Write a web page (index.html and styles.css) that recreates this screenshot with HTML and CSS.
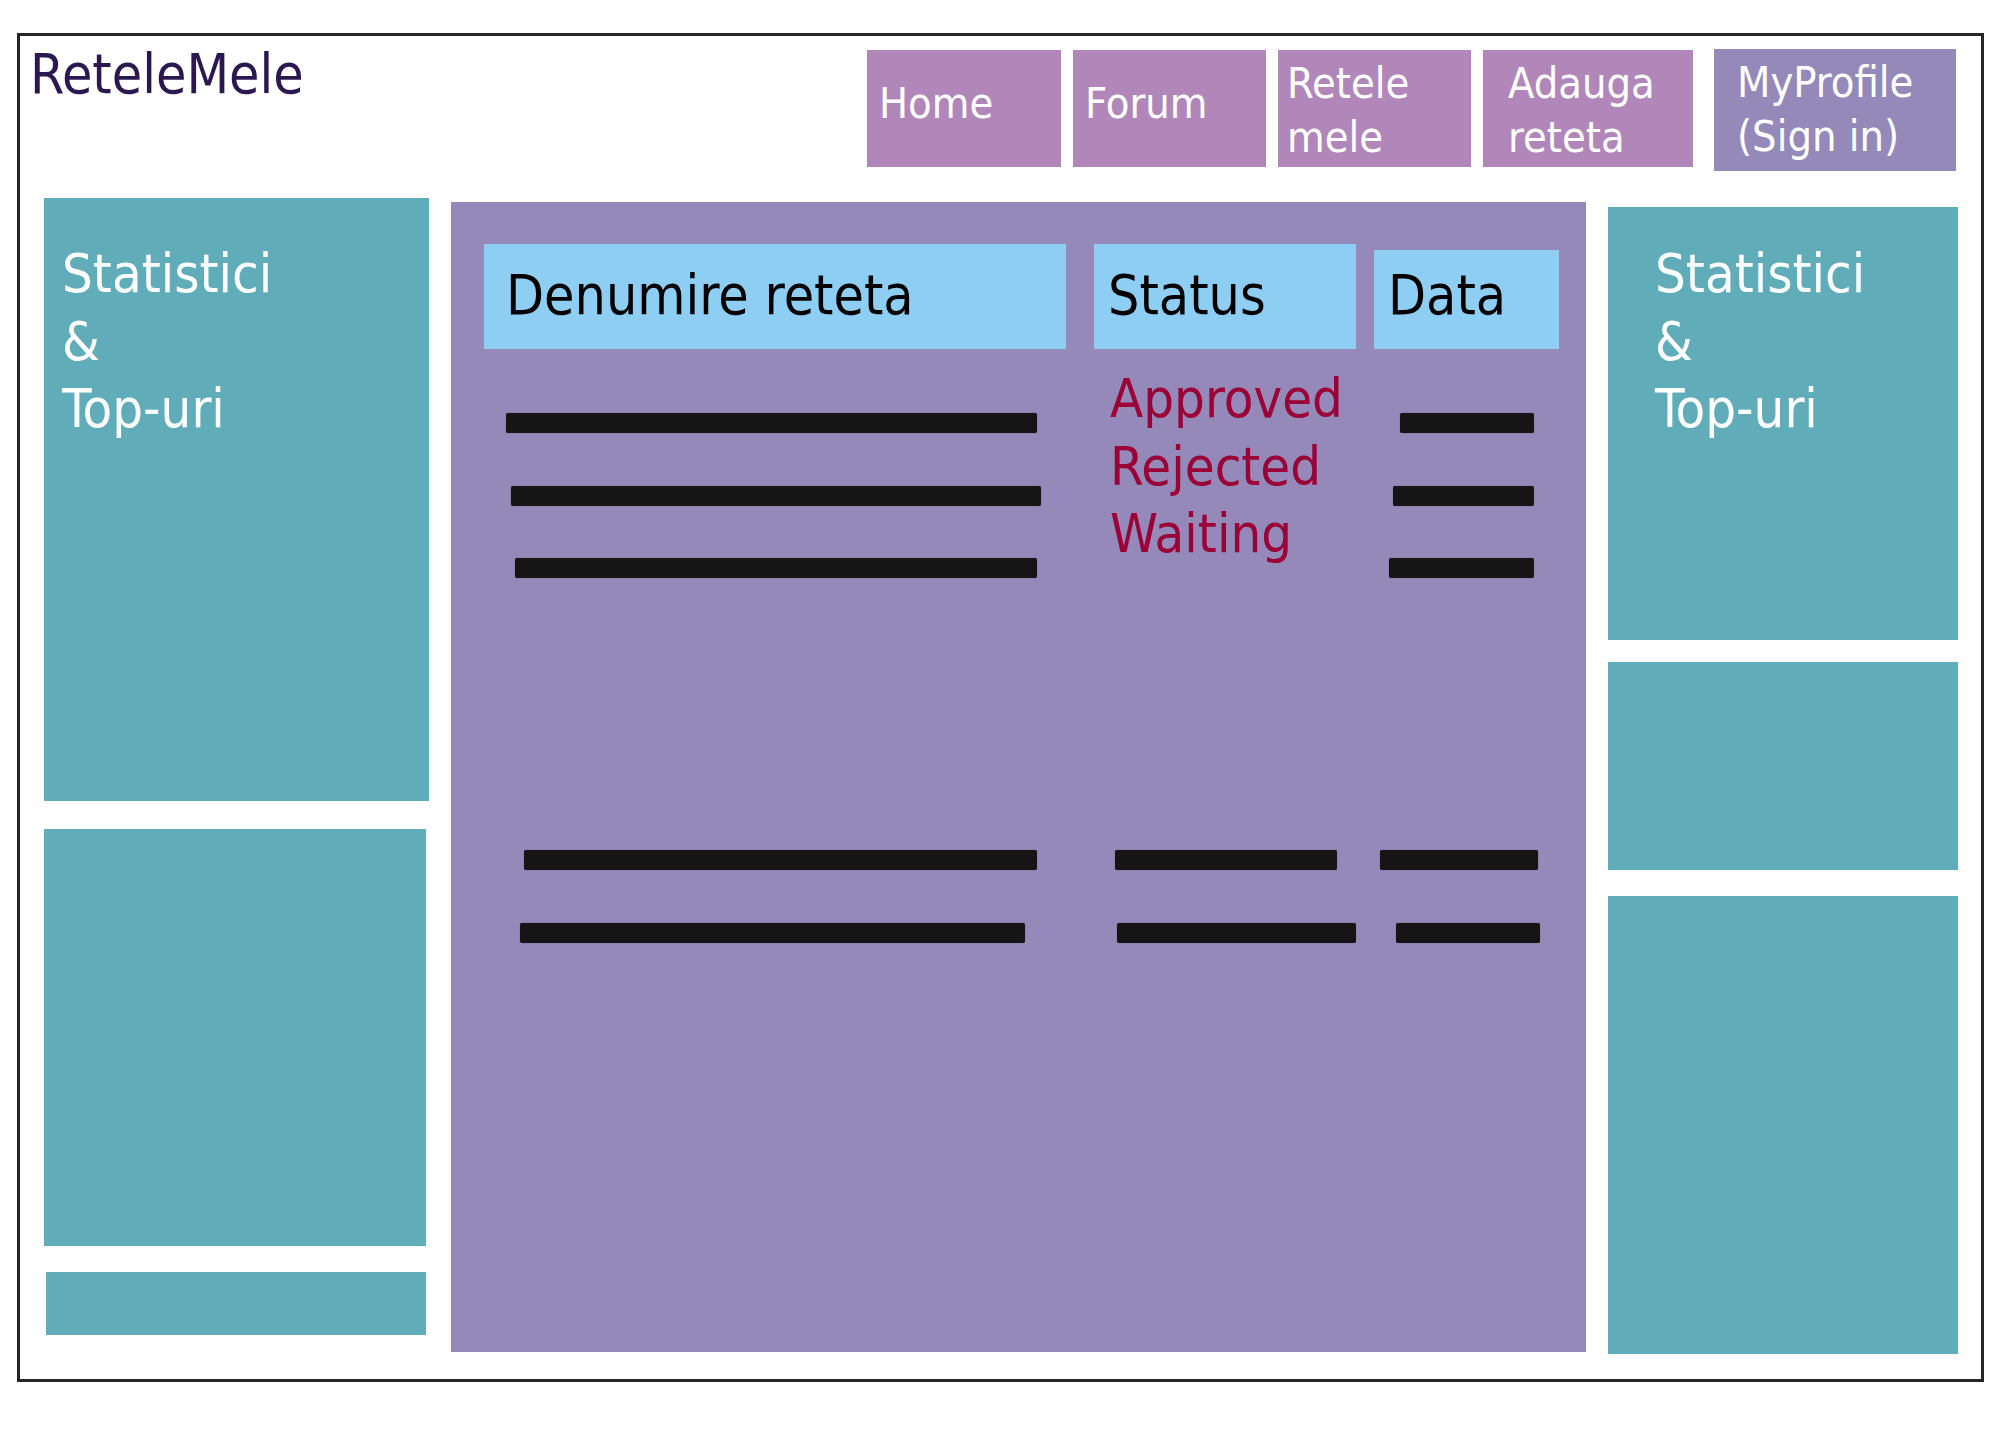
FILE: index.html
```html
<!DOCTYPE html>
<html lang="ro">
<head>
    <meta charset="UTF-8">
    <meta name="viewport" content="width=device-width, initial-scale=1.0">
    <title>ReteleMele - Retetele mele</title>
    <link rel="stylesheet" href="styles.css">
</head>
<body>
    <div class="frame">
        <header class="top-bar">
            <div class="logo">ReteleMele</div>
            <nav class="nav">
                <a class="nav-item single">Home</a>
                <a class="nav-item single">Forum</a>
                <a class="nav-item">Retele<br>mele</a>
                <a class="nav-item wide">Adauga<br>reteta</a>
                <a class="nav-item profile">MyProfile<br>(Sign in)</a>
            </nav>
        </header>

        <main class="layout">
            <!-- left sidebar -->
            <aside class="side side-left">
                <div class="tile tile-stats">Statistici<br>&amp;<br>Top-uri</div>
                <div class="tile tile-mid"></div>
                <div class="tile tile-small"></div>
            </aside>

            <!-- recipes table -->
            <section class="panel">
                <div class="table-head">
                    <div class="th col-name">Denumire reteta</div>
                    <div class="th col-status">Status</div>
                    <div class="th col-date">Data</div>
                </div>

                <div class="table-group">
                    <div class="col-name bars">
                        <div class="bar" style="width:531px;margin-left:22px"></div>
                        <div class="bar" style="width:530px;margin-left:27px"></div>
                        <div class="bar" style="width:522px;margin-left:31px"></div>
                    </div>
                    <div class="col-status status-list">
                        <div>Approved</div>
                        <div>Rejected</div>
                        <div>Waiting</div>
                    </div>
                    <div class="col-date bars">
                        <div class="bar" style="width:134px;margin-left:26px"></div>
                        <div class="bar" style="width:141px;margin-left:19px"></div>
                        <div class="bar" style="width:145px;margin-left:15px"></div>
                    </div>
                </div>

                <div class="table-group later">
                    <div class="col-name bars">
                        <div class="bar" style="width:513px;margin-left:40px"></div>
                        <div class="bar" style="width:505px;margin-left:36px"></div>
                    </div>
                    <div class="col-status bars">
                        <div class="bar" style="width:222px;margin-left:21px"></div>
                        <div class="bar" style="width:239px;margin-left:23px"></div>
                    </div>
                    <div class="col-date bars">
                        <div class="bar" style="width:158px;margin-left:6px"></div>
                        <div class="bar" style="width:144px;margin-left:22px"></div>
                    </div>
                </div>
            </section>

            <!-- right sidebar -->
            <aside class="side side-right">
                <div class="tile tile-stats">Statistici<br>&amp;<br>Top-uri</div>
                <div class="tile tile-mid"></div>
                <div class="tile tile-tall"></div>
            </aside>
        </main>
    </div>
</body>
</html>
```

FILE: styles.css
```css
body {
    margin: 0;
    background-color: #fff;
    font-family: "DejaVu Sans Condensed", "DejaVu Sans", sans-serif;
    font-stretch: condensed;
}

.frame {
    margin: 33px 0 0 17px;
    width: 1967px;
    height: 1349px;
    border: 3px solid #262626;
    box-sizing: border-box;
}

/* header */

.top-bar {
    display: flex;
    justify-content: space-between;
    align-items: flex-start;
    height: 162px;
    padding: 0 25px 0 10px;
}

.logo {
    margin-top: 5px;
    font-size: 55px;
    line-height: 67.5px;
    color: #2c1850;
}

.nav {
    display: flex;
    align-items: flex-start;
    gap: 12px;
    margin-top: 14px;
}

.nav-item {
    width: 193px;
    height: 117px;
    box-sizing: border-box;
    padding: 6px 0 0 9px;
    background-color: #b087b8;
    color: #fff;
    font-size: 43px;
    line-height: 54px;
    cursor: pointer;
}

.nav-item:first-child {
    width: 194px;
}

.nav-item.single {
    padding-top: 26px;
    padding-left: 12px;
}

.nav-item.wide {
    width: 210px;
    padding-left: 25px;
}

.nav-item.profile {
    width: 242px;
    height: 122px;
    margin: -1px 0 0 9px;
    padding-left: 23px;
    background-color: #9589ba;
}

/* main columns */

.layout {
    display: grid;
    grid-template-columns: 385px 1135px 350px;
    column-gap: 22px;
    align-items: start;
    padding: 0 23px 0 24px;
}

.side {
    display: flex;
    flex-direction: column;
}

.tile {
    background-color: #60adb9;
    color: #fff;
    font-size: 54px;
    line-height: 67.5px;
    box-sizing: border-box;
}

.side-left .tile-stats {
    height: 603px;
    padding: 42px 0 0 18px;
}

.side-left .tile-mid {
    width: 382px;
    height: 417px;
    margin-top: 28px;
}

.side-left .tile-small {
    width: 380px;
    height: 63px;
    margin: 26px 0 0 2px;
}

.side-right {
    margin-top: 9px;
}

.side-right .tile-stats {
    height: 433px;
    padding: 33px 0 0 47px;
}

.side-right .tile-mid {
    height: 208px;
    margin-top: 22px;
}

.side-right .tile-tall {
    height: 458px;
    margin-top: 26px;
}

/* recipes table */

.panel {
    margin-top: 4px;
    height: 1150px;
    box-sizing: border-box;
    padding: 42px 27px 0 33px;
    background-color: #9589ba;
}

.table-head,
.table-group {
    display: flex;
    align-items: flex-start;
}

.col-name {
    width: 582px;
}

.col-status {
    width: 262px;
    margin-left: 28px;
}

.col-date {
    width: 185px;
    margin-left: 18px;
}

.th {
    height: 105px;
    box-sizing: border-box;
    padding-top: 18px;
    background-color: #8ecef3;
    color: #000;
    font-size: 55px;
    line-height: 67.5px;
}

.th.col-name {
    padding-left: 22px;
}

.th.col-status {
    padding-left: 14px;
}

.th.col-date {
    height: 99px;
    margin-top: 6px;
    padding-top: 12px;
    padding-left: 14px;
}

.table-group {
    margin-top: 16px;
}

.table-group.later {
    margin-top: 272px;
}

.bars {
    display: flex;
    flex-direction: column;
    gap: 52.5px;
    padding-top: 48px;
}

.table-group.later .bars {
    gap: 53px;
    padding-top: 0;
}

.bar {
    height: 20px;
    border-radius: 2px;
    background-color: #151515;
    box-shadow: 0 0 1px rgba(20, 20, 20, 0.6);
}

.status-list {
    padding-left: 16px;
    box-sizing: border-box;
    color: #9b0036;
    font-size: 54px;
    line-height: 67.5px;
}
```
